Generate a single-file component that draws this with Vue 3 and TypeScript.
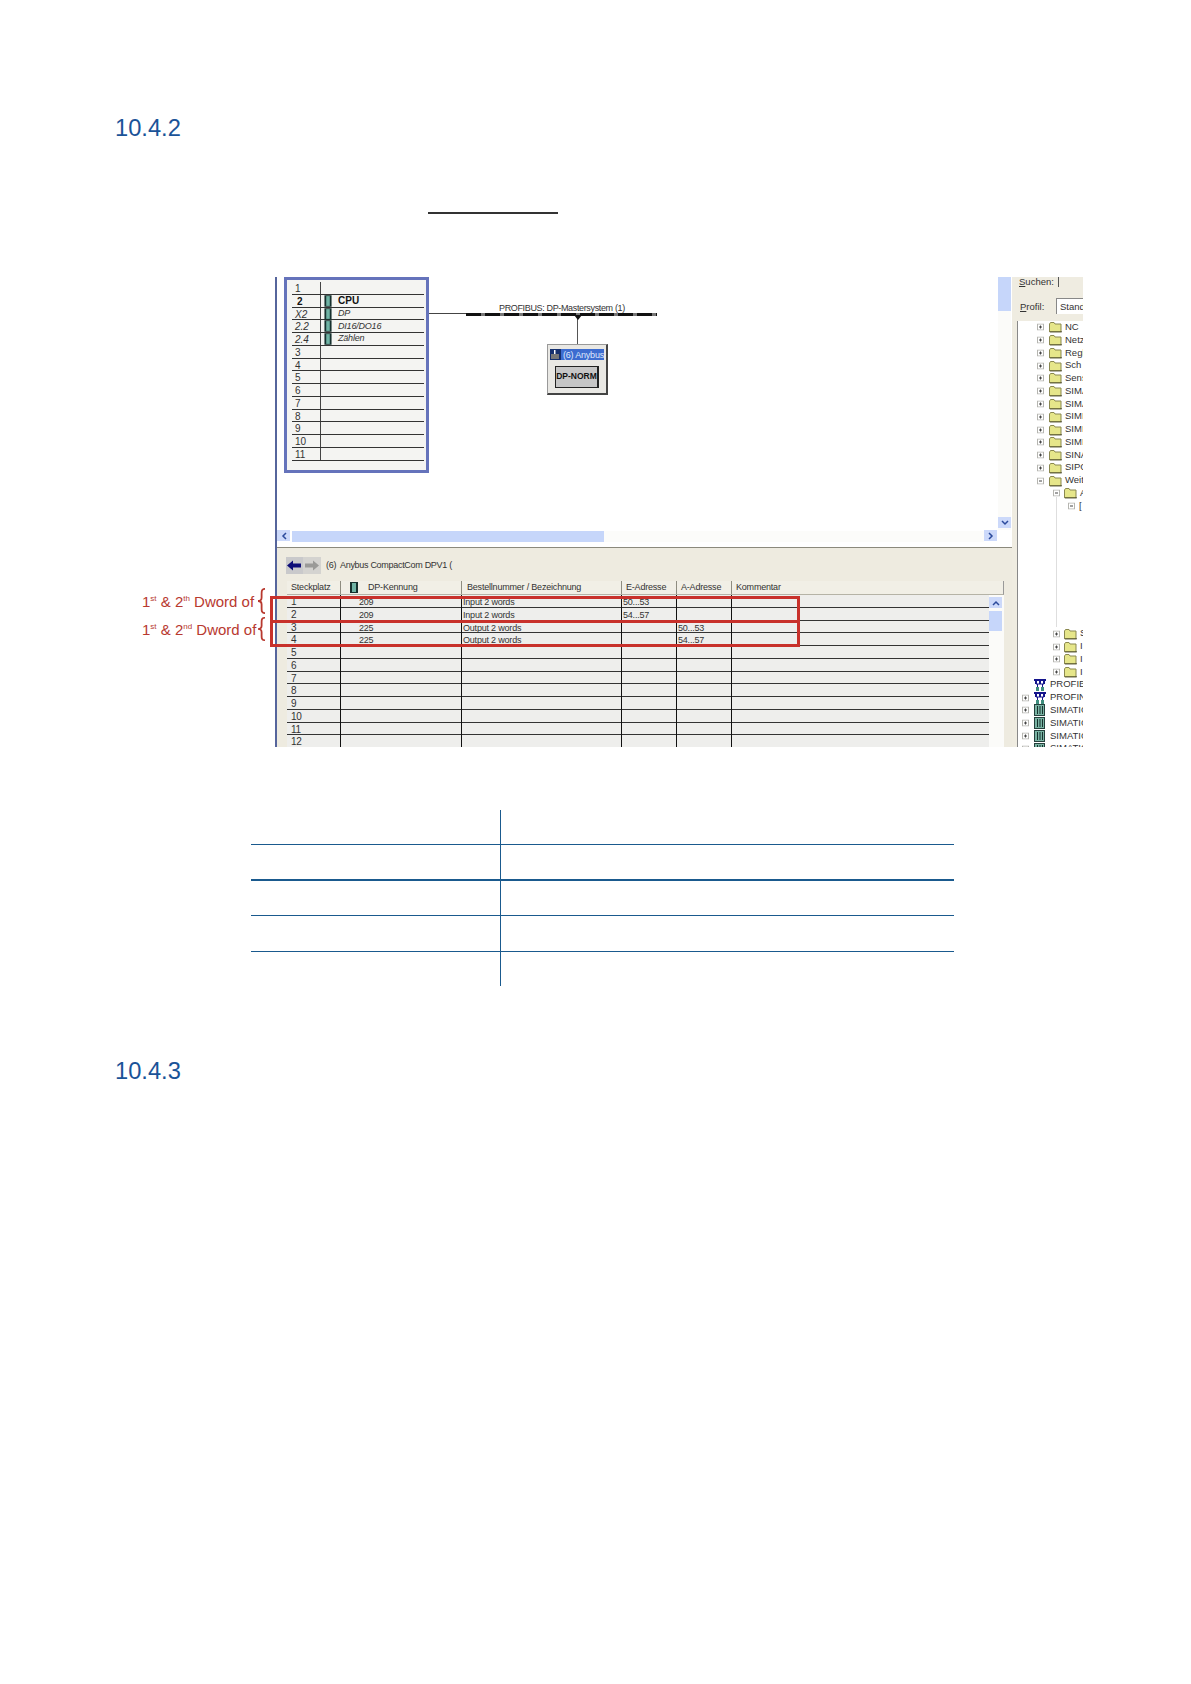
<template>
  <div class="page">
    <h2 class="heading first">10.4.2</h2>
    <div class="link-rule"></div>

    <div class="figure">
      <!-- Notes next to the screenshot -->
      <div class="notes">
        <div v-for="(note, i) in notes" :key="i" class="note">
          <span class="note-text">1<sup>st</sup> &amp; 2<sup>{{ note }}</sup> Dword of</span>
          <svg class="brace" :class="{ short: i === 1 }" viewBox="0 0 9 26" preserveAspectRatio="none">
            <path d="M8 .8C4.5 1 4.6 3 4.6 6v3.5C4.6 12 3.5 13 1 13c2.500 0 3.600 1 3.600 3.500V20c0 3-.1 5 3.400 5.200" fill="none" stroke="#b8392f" stroke-width="1.800" />
          </svg>
        </div>
      </div>

      <div class="shot">
        <div class="main">
          <div class="hw-view">
            <div class="canvas">
              <div class="rack">
                <div class="rack-inner">
                  <div v-for="slot in slots" :key="slot.no" class="rack-row" :class="slot.kind">
                    <div class="rack-no">{{ slot.no }}</div>
                    <div class="rack-name">
                      <svg v-if="slot.name" class="module" viewBox="0 0 9 13">
                        <rect x=".5" y="0" width="8" height="13" fill="#16302e" />
                        <rect x="2.500" y="1" width="4" height="11" fill="#6fb3a4" />
                      </svg>
                      {{ slot.name }}
                    </div>
                  </div>
                </div>
              </div>

              <div class="bus-thin"></div>
              <div class="bus"></div>
              <div class="bus-label">PROFIBUS: DP-Mastersystem (1)</div>
              <div class="bus-stem"></div>
              <div class="bus-tap"></div>
              <div class="device">
                <div class="device-title">
                  <svg width="11" height="11" viewBox="0 0 11 11">
                    <rect width="11" height="11" fill="#16306e" />
                    <rect x="1" y="5" width="8" height="5" fill="#777" />
                    <rect x="4" y="1" width="1.500" height="4" fill="#fff" />
                  </svg>
                  <span>(6) Anybus</span>
                </div>
                <div class="device-btn">DP-NORM</div>
              </div>
            </div>
            <div class="vscroll">
              <div class="vthumb"></div>
              <div class="arrow-btn down">
                <svg width="8" height="6" viewBox="0 0 8 6"><path d="M1 1l3 3 3-3" fill="none" stroke="#2c4b9c" stroke-width="1.500" /></svg>
              </div>
            </div>
          </div>
          <div class="hscroll">
            <div class="arrow-btn">
              <svg width="6" height="8" viewBox="0 0 6 8"><path d="M5 1L2 4l3 3" fill="none" stroke="#2c4b9c" stroke-width="1.500" /></svg>
            </div>
            <div class="hthumb"></div>
            <div class="htrack"></div>
            <div class="arrow-btn">
              <svg width="6" height="8" viewBox="0 0 6 8"><path d="M1 1l3 3-3 3" fill="none" stroke="#2c4b9c" stroke-width="1.500" /></svg>
            </div>
          </div>

          <div class="detail">
            <div class="detail-bar">
              <div class="nav-btns">
                <svg width="17" height="17" viewBox="0 0 17 17">
                  <rect width="17" height="17" fill="#c9c9cb" />
                  <path d="M1 8.500L7 3.500V6.500H15V10.500H7V13.500Z" fill="#0c0c78" />
                </svg>
                <svg width="18" height="17" viewBox="0 0 18 17">
                  <rect width="18" height="17" fill="#d4d3d0" />
                  <path d="M16 8.500L10 3.500V6.500H2V10.500H10V13.500Z" fill="#9a9a98" />
                </svg>
              </div>
              <span class="detail-title">(6)&nbsp; Anybus CompactCom DPV1 (</span>
            </div>
            <div class="slot-table">
              <div class="slot-head">
                <div>Steckplatz</div>
                <div class="head-id">
                  <svg width="8" height="11" viewBox="0 0 8 11">
                    <rect width="8" height="11" fill="#16302e" />
                    <rect x="2" y="1" width="4" height="9" fill="#6fb3a4" />
                  </svg>
                  DP-Kennung
                </div>
                <div>Bestellnummer / Bezeichnung</div>
                <div>E-Adresse</div>
                <div>A-Adresse</div>
                <div>Kommentar</div>
              </div>
              <div class="slot-body">
                <div class="slot-rows">
                  <div v-for="row in rows" :key="row.no" class="slot-row">
                    <div class="c-no">{{ row.no }}</div>
                    <div class="c-id">{{ row.id }}</div>
                    <div class="c-txt">{{ row.order }}</div>
                    <div class="c-txt">{{ row.input }}</div>
                    <div class="c-txt">{{ row.output }}</div>
                    <div></div>
                  </div>
                </div>
                <div class="table-scroll">
                  <div class="arrow-btn up">
                    <svg width="8" height="6" viewBox="0 0 8 6"><path d="M1 5l3-3 3 3" fill="none" stroke="#2c4b9c" stroke-width="1.500" /></svg>
                  </div>
                  <div class="table-thumb"></div>
                </div>
              </div>
            </div>
          </div>
        </div>

        <div class="catalog">
          <div class="cat-search"><u>S</u>uchen:<span class="cat-caret"></span></div>
          <div class="cat-profile">
            <span><u>P</u>rofil:</span>
            <div class="cat-input">Stand</div>
          </div>
          <div class="tree">
            <div v-for="(node, i) in tree" :key="i" class="tree-row" :class="'lv' + node.level">
              <svg v-if="node.exp" class="exp" width="7" height="7" viewBox="0 0 7 7">
                <rect x=".5" y=".5" width="6" height="6" fill="#fff" stroke="#b5b5b0" />
                <path :d="node.exp === '+' ? 'M2 3.500h3M3.500 2v3' : 'M2 3.500h3'" stroke="#444" />
              </svg>
              <svg v-if="node.icon === 'folder'" class="ico" width="13" height="11" viewBox="0 0 13 11">
                <path d="M.5 2.500l1-1.500h3.500l1 1.500h6v8h-11.500z" fill="#e6e68a" stroke="#8a8850" />
                <path d="M1 10.500h12" stroke="#2e2c14" />
              </svg>
              <svg v-else-if="node.icon === 'net'" class="ico" width="12" height="12" viewBox="0 0 12 12">
                <path d="M0 0h12v2H0zM1 2h2v3H1zM5 2h2v3H5zM9 2h2v3H9z" fill="#14148c" />
                <path d="M2 5h8M3.500 5v3M8.500 5v3" stroke="#14148c" />
                <path d="M2 8h3v4H2zM7 8h3v4H7z" fill="#3e8e7e" />
              </svg>
              <svg v-else-if="node.icon === 'rack'" class="ico" width="11" height="12" viewBox="0 0 11 12">
                <rect x=".5" y=".5" width="10" height="11" fill="#79b3a3" stroke="#24403c" />
                <path d="M3.500 2v8M6 2v8M8.500 2v8" stroke="#17312e" />
              </svg>
              <span v-if="node.text" class="tree-text">{{ node.text }}</span>
            </div>
            <div class="tree-guide"></div>
          </div>
        </div>
      </div>

      <!-- Red markers drawn over the screenshot -->
      <div class="marker">
        <div class="marker-mid"></div>
      </div>
    </div>

    <div class="blue-table">
      <div v-for="n in 5" :key="n" class="blue-row" :class="'r' + n">
        <div class="blue-cell left"></div>
        <div class="blue-cell"></div>
      </div>
    </div>

    <h2 class="heading second">10.4.3</h2>
  </div>
</template>

<script setup lang="ts">
interface RackSlot {
  no: string
  name: string
  kind: string
}
interface SlotRow {
  no: number
  id: string
  order: string
  input: string
  output: string
}
interface TreeNode {
  level: number
  exp: string
  icon: string
  text: string
}

const notes: string[] = ['th', 'nd']

const slots: RackSlot[] = [
  { no: '1', name: '', kind: '' },
  { no: '2', name: 'CPU', kind: 'bold' },
  { no: 'X2', name: 'DP', kind: 'sub' },
  { no: '2.2', name: 'DI16/DO16', kind: 'sub' },
  { no: '2.4', name: 'Zählen', kind: 'sub' },
  ...['3', '4', '5', '6', '7', '8', '9', '10', '11'].map((no) => ({ no, name: '', kind: '' })),
]

const filled: Record<number, Partial<SlotRow>> = {
  1: { id: '209', order: 'Input 2 words', input: '50...53' },
  2: { id: '209', order: 'Input 2 words', input: '54...57' },
  3: { id: '225', order: 'Output 2 words', output: '50...53' },
  4: { id: '225', order: 'Output 2 words', output: '54...57' },
}
const rows: SlotRow[] = Array.from({ length: 12 }, (_, i) => ({
  no: i + 1,
  id: '',
  order: '',
  input: '',
  output: '',
  ...filled[i + 1],
}))

const folder = (text: string, level = 0, exp = '+'): TreeNode => ({ level, exp, icon: 'folder', text })
const blank: TreeNode = { level: 0, exp: '', icon: '', text: '' }

const tree: TreeNode[] = [
  ...['NC', 'Netz', 'Regl', 'Sch', 'Sens', 'SIMA', 'SIMA', 'SIMI', 'SIMI', 'SIMI', 'SINA', 'SIPC'].map((t) => folder(t)),
  folder('Weit', 0, '-'),
  folder('A', 1, '-'),
  { level: 2, exp: '-', icon: '', text: '[' },
  ...Array.from({ length: 9 }, () => blank),
  folder('S', 1),
  folder('I', 1),
  folder('I', 1),
  folder('I', 1),
  { level: 3, exp: '', icon: 'net', text: 'PROFIB' },
  { level: 3, exp: '+', icon: 'net', text: 'PROFIN' },
  { level: 3, exp: '+', icon: 'rack', text: 'SIMATIC' },
  { level: 3, exp: '+', icon: 'rack', text: 'SIMATIC' },
  { level: 3, exp: '+', icon: 'rack', text: 'SIMATIC' },
  { level: 3, exp: '+', icon: 'rack', text: 'SIMATIC' },
]
</script>

<style scoped>
.page {
  width: 1191px;
  height: 1684px;
  overflow: hidden;
  padding-top: 114px;
  box-sizing: border-box;
  background: #fff;
  font-family: "Liberation Sans", Arial, sans-serif;
}

.heading {
  margin: 0 0 0 115px;
  font-size: 23.700px;
  line-height: 28px;
  font-weight: 400;
  color: #1a5398;
}

.second {
  margin-top: 71px;
}

.link-rule {
  width: 130px;
  height: 2px;
  margin: 70px 0 0 428px;
  background: #333;
}

.figure {
  position: relative;
  display: flex;
  width: 941px;
  height: 470px;
  margin: 63px 0 0 142px;
}

.notes {
  width: 133px;
  padding-top: 310px;
  box-sizing: border-box;
}

.note {
  display: flex;
  align-items: center;
  height: 28px;
  color: #b8392f;
  font-size: 15px;
  white-space: nowrap;
}

.note-text {
  width: 114px;
}

.note sup {
  font-size: 8px;
  line-height: 0;
}

.brace {
  width: 9px;
  height: 26px;
  margin-left: 1px;
}

.brace.short {
  height: 24px;
}

.shot {
  display: flex;
  width: 808px;
  height: 470px;
  overflow: hidden;
  filter: blur(0.35px);
  font-size: 9px;
  letter-spacing: -0.2px;
  color: #222;
}

.main {
  display: flex;
  flex-direction: column;
  width: 737px;
  border-left: 2px solid #56659c;
  box-sizing: border-box;
}

.hw-view {
  display: flex;
  flex: none;
  height: 253px;
}

.canvas {
  position: relative;
  flex: 1;
  background: #fff;
}

.rack {
  position: absolute;
  left: 7px;
  top: 0;
  width: 145px;
  height: 196px;
  box-sizing: border-box;
  border: 3px solid #6573bb;
  background: #f4f4f2;
}

.rack-inner {
  padding: 2px 2px 0 5px;
}

.rack-row {
  display: flex;
  height: 12.78px;
  box-sizing: border-box;
  border-bottom: 1px solid #333;
  line-height: 13px;
  color: #333;
}

.rack-no {
  width: 29px;
  padding-left: 3px;
  box-sizing: border-box;
  border-right: 1px solid #444;
  font-size: 10px;
  letter-spacing: 0;
}

.rack-name {
  display: flex;
  align-items: center;
  flex: 1;
  padding-left: 17px;
  position: relative;
}

.module {
  position: absolute;
  left: 3px;
  top: 0;
  width: 8px;
  height: 12px;
}

.rack-row.bold {
  font-weight: 700;
  font-size: 10px;
  letter-spacing: 0;
  color: #111;
}

.rack-row.bold .rack-no {
  padding-left: 5px;
}

.rack-row.sub {
  font-style: italic;
}

.bus-thin {
  position: absolute;
  left: 152px;
  top: 36px;
  width: 37px;
  height: 1px;
  background: #444;
}

.bus {
  position: absolute;
  left: 189px;
  top: 36px;
  width: 191px;
  height: 3px;
  background: repeating-linear-gradient(90deg, #111 0 15px, #777 15px 19px);
}

.bus-label {
  position: absolute;
  left: 222px;
  top: 25px;
  width: 130px;
  line-height: 12px;
  letter-spacing: -0.35px;
  white-space: nowrap;
  color: #333;
}

.bus-stem {
  position: absolute;
  left: 300px;
  top: 38px;
  width: 1px;
  height: 30px;
  background: #555;
}

.bus-tap {
  position: absolute;
  left: 297px;
  top: 38px;
  border: 4px solid transparent;
  border-top: 5px solid #111;
  border-bottom: 0;
}

.device {
  position: absolute;
  left: 270px;
  top: 67px;
  width: 61px;
  height: 51px;
  box-sizing: border-box;
  padding: 4px 2px;
  background: #e9e8e4;
  border: 1px solid #999;
  border-right: 2px solid #444;
  border-bottom: 2px solid #444;
}

.device-title {
  display: flex;
  align-items: center;
  gap: 2px;
  height: 11px;
  background: #3d6cd0;
  color: #dfe8fb;
  white-space: nowrap;
  overflow: hidden;
}

.device-btn {
  height: 20px;
  margin: 6px 5px 0;
  border: 1px solid #222;
  border-right-width: 2px;
  background: #c6c6c6;
  color: #111;
  font-size: 8.500px;
  font-weight: 700;
  letter-spacing: 0;
  line-height: 19px;
  text-align: center;
  white-space: nowrap;
  overflow: hidden;
}

.vscroll {
  display: flex;
  flex-direction: column;
  justify-content: space-between;
  width: 13px;
  margin-left: 1px;
  margin-right: 1px;
  background: #fbfbf9;
}

.vthumb {
  height: 34px;
  background: #c6d6fa;
}

.arrow-btn {
  display: flex;
  align-items: center;
  justify-content: center;
  width: 13px;
  height: 11px;
  flex: none;
  background: #ccd9fa;
}

.down {
  margin-bottom: 2px;
}

.hscroll {
  display: flex;
  flex: none;
  align-items: stretch;
  height: 13px;
  padding-right: 15px;
  background: #fff;
}

.hthumb {
  width: 312px;
  margin: 1px 0 1px 2px;
  background: #c6d6fa;
}

.htrack {
  flex: 1;
  margin: 1px 0;
  background: #fcfcfa;
}

.detail {
  flex: 1;
  min-height: 0;
  overflow: hidden;
  margin-top: 4px;
  border-top: 1px solid #8b897c;
  background: #eeebe0;
}

.detail-bar {
  display: flex;
  align-items: center;
  height: 33px;
  padding: 1px 0 0 9px;
  box-sizing: border-box;
}

.nav-btns {
  display: flex;
  gap: 0;
  margin-right: 5px;
}

.detail-title {
  color: #333;
  white-space: nowrap;
  letter-spacing: -0.3px;
}

.slot-table {
  margin: 0 8px 0 10px;
}

.slot-head,
.slot-row {
  display: grid;
  grid-template-columns: 54px 121px 160px 55px 55px 1fr;
}

.slot-head {
  height: 14px;
  line-height: 13px;
  background: #f1efe6;
  border-bottom: 1px solid #b5b3a6;
  border-right: 1px solid #999;
  box-sizing: border-box;
  color: #333;
}

.slot-head > div {
  padding-left: 4px;
  border-right: 1px solid #8e8c80;
  white-space: nowrap;
  overflow: hidden;
}

.slot-head > div:nth-child(3),
.slot-head > div:nth-child(2) {
  padding-left: 5px;
}

.slot-head > div:last-child {
  border-right: 0;
}

.head-id {
  display: flex;
  align-items: center;
  gap: 10px;
  padding-left: 9px !important;
}

.slot-body {
  display: flex;
}

.slot-rows {
  flex: 1;
  background: #eeeeec;
}

.slot-row {
  height: 12.78px;
  box-sizing: border-box;
  border-bottom: 1px solid #333;
  line-height: 14px;
  color: #333;
}

.slot-row > div {
  border-right: 1px solid #111;
  white-space: nowrap;
}

.slot-row > div:last-child {
  border-right: 0;
}

.c-no {
  padding-left: 4px;
  font-size: 10px;
}

.c-id {
  padding-left: 18px;
}

.c-txt {
  padding-left: 1px;
}

.table-scroll {
  width: 15px;
  background: #fbfbf9;
}

.up {
  margin-top: 2px;
}

.table-thumb {
  width: 13px;
  height: 20px;
  margin-top: 3px;
  background: #c6d6fa;
}

.catalog {
  display: flex;
  flex-direction: column;
  width: 71px;
  background: #efece1;
  flex: none;
  color: #333;
  font-size: 9.500px;
  letter-spacing: 0;
}

.cat-search {
  display: flex;
  align-items: center;
  height: 9px;
  padding-left: 7px;
  white-space: nowrap;
}

.cat-caret {
  width: 1px;
  height: 11px;
  margin-left: 4px;
  background: #555;
}

.cat-profile {
  display: flex;
  align-items: center;
  height: 30px;
  padding-left: 8px;
  padding-top: 10px;
  box-sizing: border-box;
}

.cat-profile span {
  width: 36px;
  flex: none;
}

.cat-input {
  flex: 1;
  height: 15px;
  padding-left: 3px;
  line-height: 15px;
  background: #fff;
  border-left: 1px solid #888;
  border-top: 1px solid #888;
  overflow: hidden;
}

.tree {
  position: relative;
  flex: 1;
  margin: 5px 0 0 5px;
  background: #fff;
  border-left: 1px solid #888;
  overflow: hidden;
}

.tree-row {
  position: relative;
  height: 12.78px;
  display: flex;
  align-items: center;
  line-height: 12px;
  white-space: nowrap;
}

.exp,
.ico {
  position: absolute;
  top: 50%;
  transform: translateY(-50%);
}

.tree-text {
  position: absolute;
  top: 0;
}

.lv0 .exp { left: 19px; }
.lv0 .ico { left: 31px; }
.lv0 .tree-text { left: 47px; }
.lv1 .exp { left: 35px; }
.lv1 .ico { left: 46px; }
.lv1 .tree-text { left: 62px; }
.lv2 .exp { left: 50px; }
.lv2 .tree-text { left: 61px; }
.lv3 .exp { left: 4px; }
.lv3 .ico { left: 16px; }
.lv3 .tree-text { left: 32px; }

.tree-guide {
  position: absolute;
  left: 38px;
  top: 176px;
  width: 1px;
  height: 130px;
  background: #dedede;
}

.marker {
  position: absolute;
  left: 128px;
  top: 319px;
  width: 530px;
  height: 51px;
  box-sizing: border-box;
  border: 3px solid #c8312b;
}

.marker-mid {
  position: absolute;
  left: 0;
  right: 0;
  top: 21px;
  height: 3px;
  background: #c8312b;
}

.blue-table {
  width: 703px;
  margin: 63px 0 0 251px;
}

.blue-row {
  display: grid;
  grid-template-columns: 250px 1fr;
  height: 35px;
  box-sizing: border-box;
  border-bottom: 1px solid #1a5a8e;
}

.blue-row.r2 {
  height: 36px;
  border-bottom-width: 2px;
}

.blue-row.r4 {
  height: 36px;
}

.blue-row.r5 {
  height: 34px;
  border-bottom: 0;
}

.blue-cell.left {
  border-right: 1px solid #1a5a8e;
}
</style>
